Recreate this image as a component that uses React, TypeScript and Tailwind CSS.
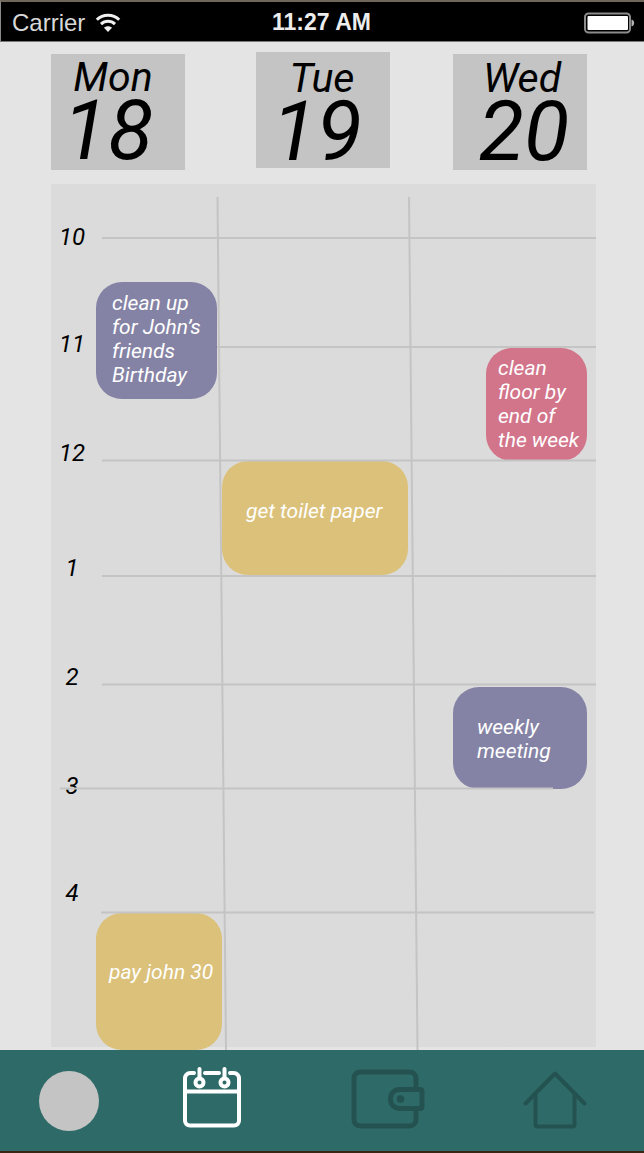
import React from "react";

type Task = { text: string; box: string };

const days = [
  { name: "Mon", date: "18", card: "mt-0.5 pt-px", nameAlign: "pr-2.5", dateAlign: "pr-5" },
  { name: "Tue", date: "19", card: "pt-1", nameAlign: "pr-0.5", dateAlign: "pr-3" },
  { name: "Wed", date: "20", card: "mt-0.5 pt-0.5", nameAlign: "pl-1", dateAlign: "pl-2" },
];

const hours = [
  { label: "10", row: "h-[107px]" },
  { label: "11", row: "h-[109px]" },
  { label: "12", row: "h-[115px]" },
  { label: "1", row: "h-[109px]" },
  { label: "2", row: "h-[109px]" },
  { label: "3", row: "h-[107px]" },
  { label: "4", row: "h-6" },
];

const columns: { day: string; tasks: Task[] }[] = [
  {
    day: "Monday",
    tasks: [
      {
        text: "clean up for John’s friends Birthday",
        box: "mt-[98px] h-[117px] mr-[5px] pl-4 pr-2 pt-[9px] bg-[#8583a5]",
      },
      {
        text: "pay john 30",
        box: "mt-[514px] h-[137px] pl-[13px] pt-[47px] bg-[#dbc17a]",
      },
    ],
  },
  {
    day: "Tuesday",
    tasks: [
      {
        text: "get toilet paper",
        box: "mt-[277px] h-[114px] mr-0.5 pl-6 pt-[38px] bg-[#dbc17a]",
      },
    ],
  },
  {
    day: "Wednesday",
    tasks: [
      {
        text: "clean floor by end of the week",
        box: "mt-[164px] h-[113px] ml-[76px] mr-[9px] pl-3 pr-1 pt-2 bg-[#d2748a]",
      },
      {
        text: "weekly meeting",
        box: "mt-[226px] h-[102px] ml-[43px] mr-[9px] pl-6 pr-6 pt-7 bg-[#8583a5]",
      },
    ],
  },
];

function StatusBar() {
  return (
    <div className="grid h-[42px] grid-cols-3 items-center border-t-2 border-b border-l border-t-[#6f675c] border-b-[#777] border-l-[#8a8a8a] bg-black pt-0.5 pl-[11px] pr-[9px] font-['Liberation_Sans',sans-serif] text-2xl text-white">
      <div className="flex items-center gap-2.5 text-[#d8d8d8]">
        <span>Carrier</span>
        <svg width="26" height="20" viewBox="0 0 26 20" fill="none" stroke="#f0f0f0" strokeWidth="3" aria-label="Wi-Fi">
          <path d="M1.8 6.8C8 .6 18 .6 24.200 6.800" />
          <path d="M6 11.200c4-3.800 10-3.800 14 0" />
          <path d="M9 14.800c2.400-2 5.600-2 8 0L13 19z" fill="#f0f0f0" stroke="none" />
        </svg>
      </div>
      <time className="pr-1 text-center text-[23px] font-bold whitespace-nowrap text-[#ededed]">11:27 AM</time>
      <svg className="justify-self-end" width="51" height="22" viewBox="0 0 51 22" fill="none" aria-label="Battery full">
        <rect x="1" y="1.500" width="45" height="19" rx="3.500" stroke="#8c8c8c" strokeWidth="2" />
        <rect x="3.500" y="4" width="40.500" height="14" rx="1" fill="#fff" />
        <path d="M47.500 7.500c3.500.5 3.500 6.500 0 7z" fill="#b5b5b5" />
      </svg>
    </div>
  );
}

function GridLines() {
  return (
    <svg
      className="pointer-events-none absolute inset-0 h-full w-full"
      viewBox="0 0 545 866"
      preserveAspectRatio="none"
      fill="none"
      stroke="#c4c4c4"
      strokeWidth="2"
      aria-hidden="true"
    >
      <path d="M51 54H545M166 163H545M51 276.500H545M51 392H545M51 500.500H545M9 604.500H502M50 728.500H543" />
      <path d="M166.500 13L175 866M358 13L366.500 866" />
    </svg>
  );
}

function CalendarIcon() {
  return (
    <svg width="60" height="64" viewBox="0 0 60 64" fill="none" stroke="#fff" strokeWidth="4" strokeLinecap="round">
      <path d="M12 7H8.500C5 7 3 9.500 3 12.500V54.500C3 57.500 5 59.500 8 59.500H52C55 59.500 57 57.500 57 54.500V12.500C57 9.500 55 7 51.500 7H48" />
      <path d="M23 7H37M3 25.500H57" />
      <path d="M17.500 3V12M42.500 3V12" />
      <circle cx="17.500" cy="16.500" r="4" />
      <circle cx="42.500" cy="16.500" r="4" />
    </svg>
  );
}

function WalletIcon() {
  return (
    <svg width="74" height="60" viewBox="0 0 74 60" fill="none" stroke="#245250" strokeWidth="5">
      <path d="M65 20V9.500C65 5.500 62 3 58.500 3H9.500C5.500 3 3 5.500 3 9.500V50.500C3 54.500 5.500 57 9.500 57H58.500C62 57 65 54.500 65 50.500V40" />
      <path d="M49 20.500H69C70.500 20.500 71 21 71 22.500V37.500C71 39 70.500 39.500 69 39.500H49C43 39.500 39.500 35.500 39.500 30S43 20.500 49 20.500Z" />
      <circle cx="49.500" cy="30" r="3.800" fill="#245250" stroke="none" />
    </svg>
  );
}

function HomeIcon() {
  return (
    <svg width="64" height="58" viewBox="0 0 64 58" fill="none" stroke="#245250" strokeWidth="4" strokeLinecap="round" strokeLinejoin="round">
      <path d="M2.500 32.500L32 2.500L61.500 32.500" />
      <path d="M12.500 24V53.500Q12.500 55.500 14.500 55.500H49.500Q51.500 55.500 51.500 53.500V24" />
    </svg>
  );
}

export default function App() {
  return (
    <div className="flex min-h-screen flex-col bg-[#e4e4e4] font-[Roboto,sans-serif]">
      <StatusBar />

      <header className="grid grid-cols-[205fr_197fr_134fr] items-start pt-2.5 pr-[57px] pb-3.5 pl-[51px] text-center text-black italic">
        {days.map((d) => (
          <h2 key={d.name} className={`h-[116px] w-[134px] bg-[#c4c4c4] ${d.card}`}>
            <span className={`block text-[41px] leading-11 ${d.nameAlign}`}>{d.name}</span>
            <span className={`block text-[83px] leading-16 ${d.dateAlign}`}>{d.date}</span>
          </h2>
        ))}
      </header>

      <main className="relative mr-12 ml-[51px] grid flex-1 grid-cols-[45fr_126fr_188fr_186fr] bg-linear-to-t from-[#e4e4e4] from-[3px] to-[#dbdbdb] to-[3px] italic">
        <ol className="pt-[41px] pr-[3px] text-center text-2xl leading-6 text-black">
          {hours.map((h) => (
            <li key={h.label} className={h.row}>
              {h.label}
            </li>
          ))}
        </ol>
        {columns.map((c) => (
          <section key={c.day} aria-label={c.day} className="flex flex-col">
            {c.tasks.map((t) => (
              <article key={t.text} className={`rounded-[26px] text-[21px] leading-6 text-white ${t.box}`}>
                <p>{t.text}</p>
              </article>
            ))}
          </section>
        ))}
        <GridLines />
      </main>

      <nav className="grid h-[103px] grid-cols-[138fr_148fr_204fr_131fr] items-center justify-items-center border-b-2 border-[#3a2414] bg-[#2e6b68] pr-6">
        <button type="button" aria-label="Profile" className="size-15 rounded-full bg-[#c4c4c4]" />
        <button type="button" aria-label="Calendar" className="pb-1.5">
          <CalendarIcon />
        </button>
        <button type="button" aria-label="Wallet" className="pb-1 pl-0.5">
          <WalletIcon />
        </button>
        <button type="button" aria-label="Home" className="pb-0.5">
          <HomeIcon />
        </button>
      </nav>
    </div>
  );
}
